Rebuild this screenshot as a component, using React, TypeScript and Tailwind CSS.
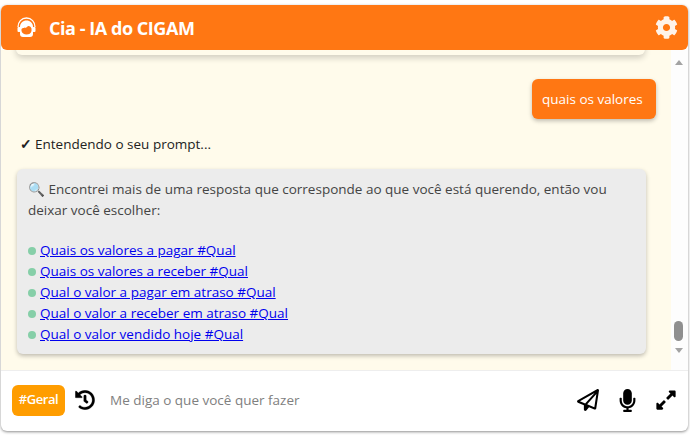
import { FaCog, FaHistory, FaMicrophone, FaExpandAlt } from "react-icons/fa";
import { FaRegPaperPlane } from "react-icons/fa6";

const links = [
  "Quais os valores a pagar #Qual",
  "Quais os valores a receber #Qual",
  "Qual o valor a pagar em atraso #Qual",
  "Qual o valor a receber em atraso #Qual",
  "Qual o valor vendido hoje #Qual",
];

function AgentIcon() {
  return (
    <svg width="23" height="22" viewBox="0 0 23 22" fill="none">
      <path d="M3 10C3 5 6.500 1 11.500 1S20 5 20 10" stroke="#fff" strokeWidth="1.300" />
      <path d="M5 10C5 6 8 3.500 11.500 3.500S18 6 18 10V17Q18 20 15 20H8Q5 20 5 17Z" fill="#fff" />
      <rect x="2.500" y="10" width="3" height="5" rx="1" fill="#fff" />
      <rect x="17.500" y="10" width="3" height="5" rx="1" fill="#fff" />
      <path d="M6.500 12C8.500 10 10 11.500 12 10C13 8.500 15 8.500 16.500 11.500V14C16 16.500 14 17.500 11.500 17.500S7 16 6.500 14Z" fill="#ff7713" />
    </svg>
  );
}

export default function App() {
  return (
    <div className="h-[436px] w-[690px] bg-white pl-px pt-[5px] font-['Open_Sans',sans-serif]">
      <div className="flex h-[426px] w-[687px] flex-col rounded-md bg-white shadow-[0_1px_3px_rgba(0,0,0,0.45)]">
        <header className="z-10 flex h-[45px] shrink-0 items-center justify-between rounded-md bg-[#ff7713] pl-[14px] pr-[10px]">
          <div className="flex items-center gap-[11px]">
            <AgentIcon />
            <span className="pt-[1px] text-[18px] font-bold tracking-[-0.45px] text-white">Cia - IA do CIGAM</span>
          </div>
          <FaCog className="text-[23px] text-[#fff3ea]" />
        </header>

        <div className="flex h-[320px] shrink-0">
          <main className="flex w-[670px] flex-col overflow-hidden bg-[#fffbeb] pl-[15px] pr-[15px] text-[13.5px] text-[#333]">
            <div className="-mt-[20px] h-[25px] w-[629px] shrink-0 rounded-md bg-[#fffbeb] shadow-[0_3px_6px_rgba(0,0,0,0.18)]" />
            <div className="mt-[24px] flex justify-end">
              <div className="flex h-[40px] w-[124px] items-center rounded-md bg-[#ff7713] pl-[10px] text-white shadow-[0_2px_4px_rgba(0,0,0,0.25)]">
                quais os valores
              </div>
            </div>
            <p className="mt-[16px] flex items-center gap-[3px] pl-[4px] leading-[19px] text-[#222]">
              <span className="font-bold">✓</span>
              <span>Entendendo o seu prompt...</span>
            </p>
            <div className="ml-px mt-[15px] h-[185px] w-[629px] shrink-0 rounded-md bg-[#ececec] px-[11px] pt-[10px] leading-[21px] text-[#444] shadow-[0_2px_4px_rgba(0,0,0,0.25)]">
              <p>🔍 Encontrei mais de uma resposta que corresponde ao que você está querendo, então vou deixar você escolher:</p>
              <ul className="mt-[19px]">
                {links.map((l) => (
                  <li key={l} className="flex items-center gap-[4px]">
                    <span className="h-[8px] w-[8px] rounded-full bg-[#86cfa8]" />
                    <a href="#" className="text-[#0000ee] underline">{l}</a>
                  </li>
                ))}
              </ul>
            </div>
          </main>
          <div className="relative w-[17px] bg-[#fdfdfd]">
            <span className="absolute left-[4px] top-[10px] h-0 w-0 border-x-[4px] border-b-[5px] border-x-transparent border-b-[#a3a3a3]" />
            <span className="absolute left-[3px] top-[271px] h-[20px] w-[9px] rounded-full bg-[#8f8f8f]" />
            <span className="absolute left-[4px] top-[298px] h-0 w-0 border-x-[4px] border-t-[5px] border-x-transparent border-t-[#a3a3a3]" />
          </div>
        </div>

        <footer className="flex flex-1 items-center border-t border-[#eeeeee] pb-[2px] pl-[11px] pr-[11px]">
          <div className="flex h-[31px] w-[53px] items-center justify-center rounded-md bg-[#ff9d00] text-[13px] font-semibold tracking-[-0.4px] text-white">
            #Geral
          </div>
          <FaHistory className="ml-[10px] stroke-current stroke-[6] text-[20px] text-black" />
          <span className="ml-[15px] flex-1 text-[13.5px] text-[#808080]">Me diga o que você quer fazer</span>
          <FaRegPaperPlane className="text-[22px] text-black" />
          <FaMicrophone className="ml-[17px] text-[23px] text-black" />
          <FaExpandAlt className="ml-[16px] text-[22px] text-black" />
        </footer>
      </div>
    </div>
  );
}
